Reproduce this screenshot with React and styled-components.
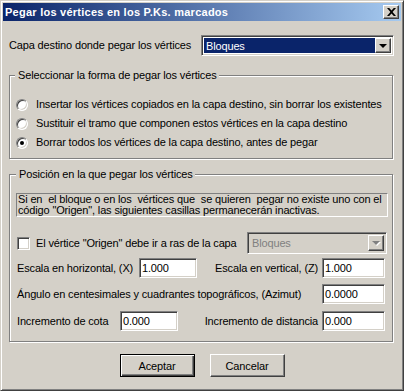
import React from "react";
import styled, { createGlobalStyle } from "styled-components";

const GlobalStyle = createGlobalStyle`
  html, body {
    margin: 0;
    padding: 0;
    background: #d4d0c8;
  }
  body {
    font-family: "Liberation Sans", Arial, sans-serif;
    font-size: 11px;
    color: #000;
  }
`;

const Window = styled.div`
  box-sizing: border-box;
  width: 404px;
  height: 391px;
  padding: 2px;
  background: #d4d0c8;
  border: 1px solid;
  border-color: #d4d0c8 #404040 #404040 #d4d0c8;
  box-shadow: inset 1px 1px 0 #fff, inset -1px -1px 0 #808080;
  display: flex;
  flex-direction: column;
  letter-spacing: -0.15px;
`;

const TitleBar = styled.div`
  height: 18px;
  display: flex;
  align-items: center;
  justify-content: space-between;
  padding: 0 2px 0 2px;
  background: linear-gradient(to right, #0a246a, #a6caf0);
  color: #fff;
  font-weight: bold;
  letter-spacing: 0.25px;
`;

const TitleText = styled.span`
  line-height: 18px;
`;

const raised = `
  background: #d4d0c8;
  border: 1px solid;
  border-color: #fff #404040 #404040 #fff;
  box-shadow: inset -1px -1px 0 #808080, inset 1px 1px 0 #d4d0c8;
`;

const sunken = `
  border: 1px solid;
  border-color: #808080 #fff #fff #808080;
  box-shadow: inset 1px 1px 0 #404040, inset -1px -1px 0 #d4d0c8;
`;

const CloseButton = styled.div`
  box-sizing: border-box;
  width: 16px;
  height: 14px;
  ${raised}
  display: flex;
  align-items: center;
  justify-content: center;
`;

const Body = styled.div`
  flex: 1;
  padding: 14px 7px 0 6px;
  display: flex;
  flex-direction: column;
`;

const TopRow = styled.div`
  height: 21px;
  display: flex;
  align-items: center;
`;

const Text = styled.span`
  white-space: nowrap;
  line-height: 13px;
`;

const Combo = styled.div`
  box-sizing: border-box;
  width: ${p => p.$w}px;
  height: ${p => p.$h}px;
  margin-left: auto;
  margin-right: ${p => p.$mr || 0}px;
  ${sunken}
  background: ${p => (p.$disabled ? "#d4d0c8" : "#fff")};
  padding: 2px;
  display: flex;
  align-items: stretch;
`;

const ComboValue = styled.div`
  flex: 1;
  display: flex;
  align-items: center;
  padding-left: 2px;
  background: ${p => (p.$selected ? "#0a246a" : "transparent")};
  color: ${p => (p.$selected ? "#fff" : p.$disabled ? "#808080" : "#000")};
`;

const ComboButton = styled.div`
  box-sizing: border-box;
  width: 16px;
  ${raised}
  display: flex;
  align-items: center;
  justify-content: center;
`;

const Arrow = styled.div`
  width: 0;
  height: 0;
  border-left: 4px solid transparent;
  border-right: 4px solid transparent;
  border-top: 4px solid ${p => (p.$disabled ? "#808080" : "#000")};
  ${p => p.$disabled && "filter: drop-shadow(1px 1px 0 #fff);"}
`;

const Group = styled.fieldset`
  margin: ${p => p.$mt}px 1px 0 0;
  padding: ${p => p.$pad};
  border: 1px solid #808080;
  box-shadow: inset 1px 1px 0 #fff, 1px 1px 0 #fff;
  min-width: 0;
`;

const Legend = styled.legend`
  margin-left: -1px;
  padding: 0 2px 0 3px;
  line-height: 13px;
  background: #d4d0c8;
`;

const OptionRow = styled.div`
  height: 19px;
  display: flex;
  align-items: center;
  gap: 8px;
`;

const Radio = styled.span`
  box-sizing: border-box;
  width: 12px;
  height: 12px;
  border-radius: 50%;
  background: #fff;
  border: 1px solid;
  border-color: #808080 #fff #fff #808080;
  box-shadow: inset 1px 1px 0 #404040, inset -1px -1px 0 #d4d0c8;
  display: flex;
  align-items: center;
  justify-content: center;
  flex: none;
  &::after {
    content: "";
    width: 4px;
    height: 4px;
    border-radius: 50%;
    background: ${p => (p.$checked ? "#000" : "transparent")};
  }
`;

const Info = styled.div`
  box-sizing: border-box;
  height: 24px;
  margin: 0 -3px 0 -1px;
  padding: 0 0 0 1px;
  border: 1px solid;
  border-color: #808080 #fff #fff #808080;
  line-height: 11px;
  white-space: pre;
`;

const Row = styled.div`
  height: ${p => p.$h || 20}px;
  margin-top: ${p => p.$mt}px;
  display: flex;
  align-items: center;
`;

const Label = styled.span`
  white-space: nowrap;
  width: ${p => (p.$w ? `${p.$w}px` : "auto")};
  flex: none;
`;

const RightGroup = styled.div`
  margin-left: auto;
  display: flex;
  align-items: center;
  gap: 4px;
`;

const Check = styled.span`
  box-sizing: border-box;
  width: 13px;
  height: 13px;
  background: #fff;
  ${sunken}
  margin-right: 6px;
  flex: none;
`;

const Field = styled.div`
  box-sizing: border-box;
  width: ${p => p.$w}px;
  height: 20px;
  background: #fff;
  ${sunken}
  padding-left: 2px;
  display: flex;
  align-items: center;
  flex: none;
`;

const ButtonRow = styled.div`
  margin-top: 12px;
  display: flex;
  justify-content: center;
  gap: 15px;
  padding-left: 1px;
`;

const Button = styled.div`
  box-sizing: border-box;
  width: 75px;
  height: 23px;
  display: flex;
  align-items: center;
  justify-content: center;
  background: #d4d0c8;
  ${p =>
    p.$default
      ? `border: 1px solid #000;
         box-shadow: inset 1px 1px 0 #fff, inset -1px -1px 0 #404040, inset -2px -2px 0 #808080;`
      : `border: 1px solid;
         border-color: #fff #404040 #404040 #fff;
         box-shadow: inset -1px -1px 0 #808080;`}
`;

const options = [
  "Insertar los vértices copiados en la capa destino, sin borrar los existentes",
  "Sustituir el tramo que componen estos vértices en la capa destino",
  "Borrar todos los vértices de la capa destino, antes de pegar",
];

export default function App() {
  return (
    <>
      <GlobalStyle />
      <Window>
        <TitleBar>
          <TitleText>Pegar los vértices en los P.Ks. marcados</TitleText>
          <CloseButton>
            <svg width="9" height="8" viewBox="0 0 9 8">
              <path d="M0 0h2.2l2.3 2.6L6.8 0H9L5.6 4 9 8H6.8L4.5 5.4 2.2 8H0l3.4-4z" fill="#000" />
            </svg>
          </CloseButton>
        </TitleBar>
        <Body>
          <TopRow>
            <Text>Capa destino donde pegar los vértices</Text>
            <Combo $w={193} $h={21}>
              <ComboValue $selected>Bloques</ComboValue>
              <ComboButton>
                <Arrow />
              </ComboButton>
            </Combo>
          </TopRow>

          <Group $mt={13} $pad="13px 7px 6px 6px">
            <Legend>Seleccionar la forma de pegar los vértices</Legend>
            {options.map((o, i) => (
              <OptionRow key={i}>
                <Radio $checked={i === 2} />
                <Text>{o}</Text>
              </OptionRow>
            ))}
          </Group>

          <Group $mt={9} $pad="12px 7px 10px 7px">
            <Legend>Posición en la que pegar los vértices</Legend>
            <Info>
              {"Si en  el bloque o en los  vértices que  se quieren  pegar no existe uno con el\ncódigo \"Origen\", las siguientes casillas permanecerán inactivas."}
            </Info>
            <Row $mt={15} $h={22}>
              <Check />
              <Label>El vértice "Origen" debe ir a ras de la capa</Label>
              <Combo $w={140} $h={22} $mr={-2} $disabled>
                <ComboValue $disabled>Bloques</ComboValue>
                <ComboButton>
                  <Arrow $disabled />
                </ComboButton>
              </Combo>
            </Row>
            <Row $mt={4}>
              <Label $w={122}>Escala en horizontal, (X)</Label>
              <Field $w={58}>1.000</Field>
              <RightGroup>
                <Label>Escala en vertical, (Z)</Label>
                <Field $w={63}>1.000</Field>
              </RightGroup>
            </Row>
            <Row $mt={6}>
              <Label>Ángulo en centesimales y cuadrantes topográficos, (Azimut)</Label>
              <RightGroup>
                <Field $w={63}>0.0000</Field>
              </RightGroup>
            </Row>
            <Row $mt={7}>
              <Label $w={103}>Incremento de cota</Label>
              <Field $w={58}>0.000</Field>
              <RightGroup>
                <Label>Incremento de distancia</Label>
                <Field $w={63}>0.000</Field>
              </RightGroup>
            </Row>
          </Group>

          <ButtonRow>
            <Button $default>Aceptar</Button>
            <Button>Cancelar</Button>
          </ButtonRow>
        </Body>
      </Window>
    </>
  );
}
